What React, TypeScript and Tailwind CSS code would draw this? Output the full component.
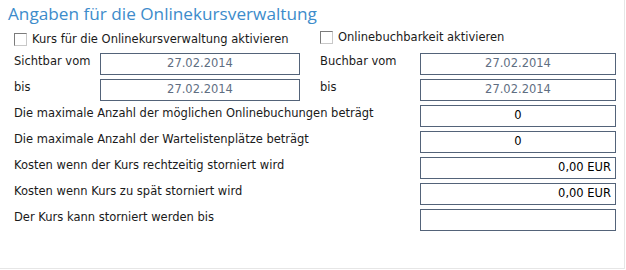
import React from 'react';

function Field({ value, align = 'center', muted = false, w = 'w-[196px]' }: { value?: string; align?: 'center' | 'right'; muted?: boolean; w?: string }) {
  return (
    <div
      className={`${w} h-[22px] border border-[#536379] bg-white flex items-center px-1 ${
        align === 'right' ? 'justify-end' : 'justify-center'
      } ${muted ? 'text-[#5f6e82]' : 'text-black'}`}
    >
      {value}
    </div>
  );
}

function Check({ label }: { label: string }) {
  return (
    <label className="flex items-center gap-[5px]">
      <span className="w-[13px] h-[13px] border border-t-[#7b7b7b] border-l-[#7b7b7b] border-r-[#c8c8c8] border-b-[#c8c8c8] bg-white" />
      <span>{label}</span>
    </label>
  );
}

const rows: { label: string; value: string; align: 'center' | 'right' }[] = [
  { label: 'Die maximale Anzahl der möglichen Onlinebuchungen beträgt', value: '0', align: 'center' },
  { label: 'Die maximale Anzahl der Wartelistenplätze beträgt', value: '0', align: 'center' },
  { label: 'Kosten wenn der Kurs rechtzeitig storniert wird', value: '0,00 EUR', align: 'right' },
  { label: 'Kosten wenn Kurs zu spät storniert wird', value: '0,00 EUR', align: 'right' },
  { label: 'Der Kurs kann storniert werden bis', value: '', align: 'center' },
];

export default function App() {
  return (
    <div
      className="w-[625px] h-[269px] bg-white border-r border-b border-[#e6e6e6] text-[11.5px] text-[#1a1a1a]"
      style={{ fontFamily: '"DejaVu Sans", Verdana, sans-serif' }}
    >
      <h1
        className="pl-2 pt-[3px] text-[17.2px] leading-[22px] text-[#3d8ccb]"
        style={{ fontFamily: '"Open Sans", "DejaVu Sans", sans-serif' }}
      >
        Angaben für die Onlinekursverwaltung
      </h1>

      <div className="pl-[14px] mt-[6px] flex h-[13px]">
        <div className="w-[306px]">
          <Check label="Kurs für die Onlinekursverwaltung aktivieren" />
        </div>
        <Check label="Onlinebuchbarkeit aktivieren" />
      </div>

      <div className="pl-[14px] mt-[9px] flex flex-col gap-[4px]">
        {[
          ['Sichtbar vom', 'Buchbar vom'],
          ['bis', 'bis'],
        ].map(([l, r], i) => (
          <div key={i} className="flex">
            <span className="w-[86px]">{l}</span>
            <Field value="27.02.2014" muted w="w-[200px]" />
            <span className="w-[120px] pl-[20px]">{r}</span>
            <Field value="27.02.2014" muted />
          </div>
        ))}
      </div>

      <div className="pl-[14px] mt-[4px] flex flex-col gap-[4px]">
        {rows.map((r) => (
          <div key={r.label} className="flex">
            <span className="w-[406px]">{r.label}</span>
            <Field value={r.value} align={r.align} />
          </div>
        ))}
      </div>
    </div>
  );
}
